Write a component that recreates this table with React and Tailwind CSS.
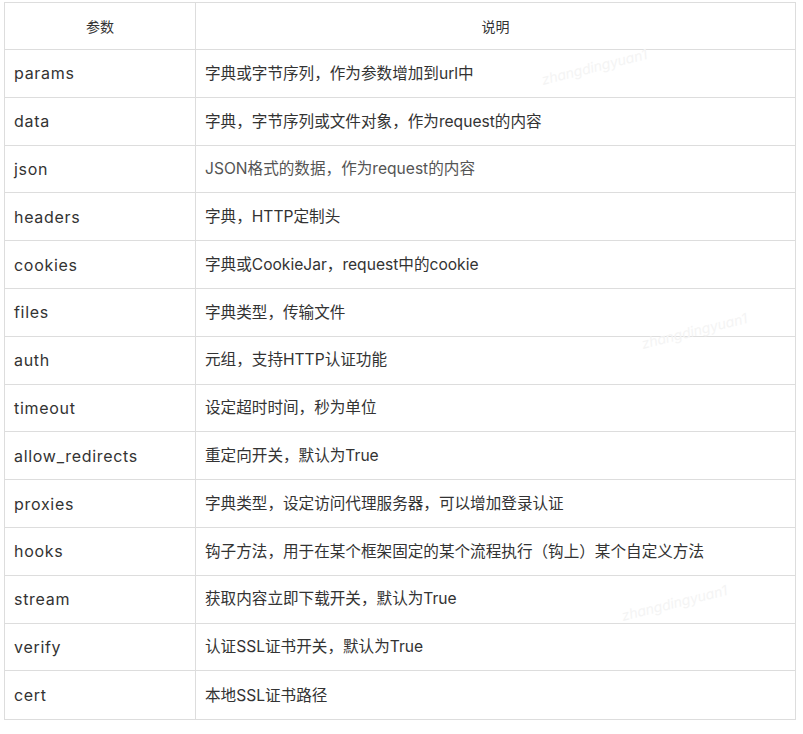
import React from "react";

const rows = [
  ["params", "字典或字节序列，作为参数增加到url中"],
  ["data", "字典，字节序列或文件对象，作为request的内容"],
  ["json", "JSON格式的数据，作为request的内容", true],
  ["headers", "字典，HTTP定制头"],
  ["cookies", "字典或CookieJar，request中的cookie"],
  ["files", "字典类型，传输文件"],
  ["auth", "元组，支持HTTP认证功能"],
  ["timeout", "设定超时时间，秒为单位"],
  ["allow_redirects", "重定向开关，默认为True"],
  ["proxies", "字典类型，设定访问代理服务器，可以增加登录认证"],
  ["hooks", "钩子方法，用于在某个框架固定的某个流程执行（钩上）某个自定义方法"],
  ["stream", "获取内容立即下载开关，默认为True"],
  ["verify", "认证SSL证书开关，默认为True"],
  ["cert", "本地SSL证书路径"],
];

const marks = [
  [540, 56], [640, 320], [620, 592],
];

export default function App() {
  return (
    <div
      className="relative w-[803px] h-[734px] bg-white pl-[4px] pt-[2px] text-[#333]"
      style={{ fontFamily: '"Inter", "Noto Sans CJK SC", sans-serif' }}
    >
      <div className="w-[792px] border border-[#dddddd] grid grid-cols-[191px_1fr]">
        <div className="h-[47px] flex items-center justify-center text-[14px] border-r border-b border-[#dddddd]">参数</div>
        <div className="h-[47px] flex items-center justify-center text-[14px] border-b border-[#dddddd]">说明</div>
        {rows.map(([k, v, light], i) => (
          <React.Fragment key={k}>
            <div
              className={`h-[47.8px] flex items-center pl-[9px] text-[16px] tracking-[0.7px] border-r border-[#dddddd] ${i < rows.length - 1 ? "border-b" : ""}`}
            >
              {k}
            </div>
            <div
              className={`h-[47.8px] flex items-center pl-[9px] text-[15.6px] border-[#dddddd] ${i < rows.length - 1 ? "border-b" : ""} ${light ? "text-[#555]" : ""}`}
            >
              {v}
            </div>
          </React.Fragment>
        ))}
      </div>
      {marks.map(([x, y], i) => (
        <div
          key={i}
          className="absolute text-[14px] italic text-[#f4f4f4] -rotate-[14deg] pointer-events-none select-none"
          style={{ left: x, top: y }}
        >
          zhangdingyuan1
        </div>
      ))}
    </div>
  );
}
